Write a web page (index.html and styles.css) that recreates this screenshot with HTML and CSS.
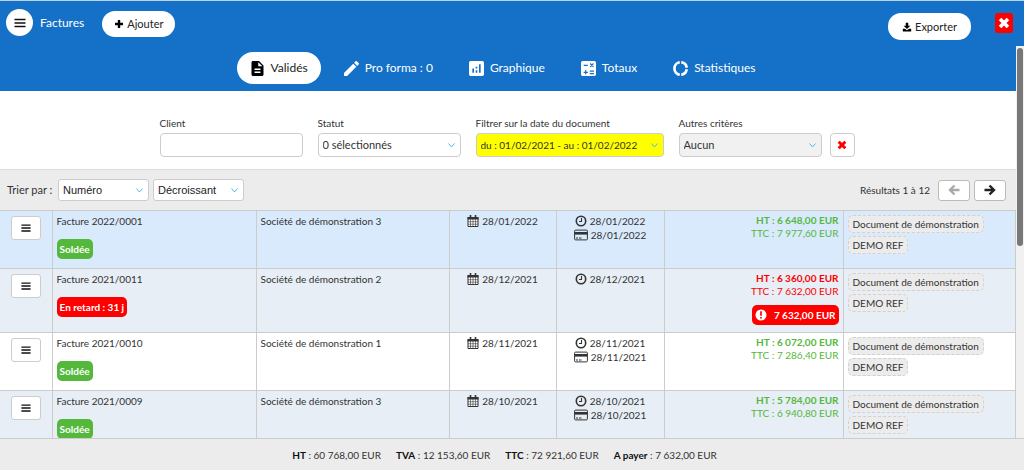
FILE: index.html
```
<!DOCTYPE html>
<html lang="fr">
<head>
<meta charset="utf-8">
<title>Factures</title>
<meta name="viewport" content="width=device-width, initial-scale=1">
<link rel="stylesheet" href="styles.css">
</head>
<body>
<svg class="sprite" aria-hidden="true">
  <symbol id="bars" viewBox="0 0 12 12"><path d="M.5 2.500h11M.5 6h11M.5 9.500h11" stroke="currentColor" stroke-width="1.700"/></symbol>
  <symbol id="plus" viewBox="0 0 10 10"><path d="M5 1v8M1 5h8" stroke="currentColor" stroke-width="2.400"/></symbol>
  <symbol id="cross" viewBox="0 0 10 10"><path d="M1.700 1.700l6.600 6.600M8.300 1.700L1.700 8.300" stroke="currentColor" stroke-width="3"/></symbol>
  <symbol id="download" viewBox="0 0 12 12"><path d="M4.500 1h3v3.500H10L6 8.500 2 4.500h2.500zM1 8h2.500L6 10l2.500-2H11v3.500H1z" fill="currentColor"/></symbol>
  <symbol id="doc" viewBox="4 2 16 20"><path d="M14 2H6c-1.100 0-2 .9-2 2v16c0 1.100.9 2 2 2h12c1.100 0 2-.9 2-2V8l-6-6zm2 16H8v-2h8v2zm0-4H8v-2h8v2zm-3-5V3.500L18.500 9H13z" fill="currentColor"/></symbol>
  <symbol id="pencil" viewBox="3 3 18 18"><path d="M3 17.250V21h3.750L17.810 9.940l-3.750-3.750L3 17.250zM20.710 7.040a1 1 0 0 0 0-1.410l-2.340-2.340a1 1 0 0 0-1.410 0l-1.830 1.830 3.750 3.750 1.830-1.830z" fill="currentColor"/></symbol>
  <symbol id="chart" viewBox="3 3 18 18"><path fill-rule="evenodd" d="M19 3H5a2 2 0 0 0-2 2v14a2 2 0 0 0 2 2h14a2 2 0 0 0 2-2V5a2 2 0 0 0-2-2zM9 17H7v-5h2v5zm4 0h-2v-3h2v3zm0-5h-2v-2h2v2zm4 5h-2V7h2v10z" fill="currentColor"/></symbol>
  <symbol id="calc" viewBox="3 3 18 18"><rect x="3" y="3" width="18" height="18" rx="2" fill="currentColor"/><path d="M6.200 8.300h5M13.500 15h5M13.500 18h5M8.700 14v5M6.200 16.500h5M14 6l4 4M18 6l-4 4" stroke="#1471c7" stroke-width="1.500"/></symbol>
  <symbol id="donut" viewBox="2 2 20 20"><path d="M13 3.700a8.400 8.400 0 0 1 7.300 7.300M20.300 13a8.400 8.400 0 0 1-7.300 7.300M11 20.300A8.400 8.400 0 0 1 11 3.700" fill="none" stroke="currentColor" stroke-width="3.600"/></symbol>
  <symbol id="calendar" viewBox="0 0 12 12"><path d="M1 2.500h10v9H1z" fill="#fff" stroke="currentColor"/><path d="M.5 2h11v2.500H.5z" fill="currentColor"/><path d="M3.500 4v7.500M6 4v7.500M8.500 4v7.500M1 6.700h10M1 9.200h10" stroke="currentColor" stroke-width=".6"/><path d="M3.500 0v3M8.500 0v3" stroke="currentColor" stroke-width="1.600"/></symbol>
  <symbol id="clock" viewBox="0 0 12 12"><circle cx="6" cy="6" r="4.700" fill="none" stroke="currentColor" stroke-width="1.600"/><path d="M6.500 3v3.500H4" fill="none" stroke="currentColor" stroke-width="1.100"/></symbol>
  <symbol id="card" viewBox="0 0 14 12"><rect x=".6" y="1.100" width="12.800" height="9.800" rx="1" fill="none" stroke="currentColor" stroke-width="1"/><path d="M.5 3h13v2.600H.5z" fill="currentColor"/><path d="M2 9h2M5 9h2.500" stroke="currentColor"/></symbol>
  <symbol id="alert" viewBox="0 0 12 12"><circle cx="6" cy="6" r="5.500" fill="#fff"/><path d="M6 2.300v4.400M6 7.900v1.700" stroke="#f00" stroke-width="1.700"/></symbol>
  <symbol id="left" viewBox="0 0 12 12"><path d="M11.500 6H2.500M6.500 1.500L2 6l4.500 4.500" fill="none" stroke="currentColor" stroke-width="2.400"/></symbol>
  <symbol id="right" viewBox="0 0 12 12"><path d="M.5 6h9M5.500 1.500L10 6l-4.500 4.500" fill="none" stroke="currentColor" stroke-width="2.400"/></symbol>
</svg>

<header class="topbar">
  <button class="round" aria-label="Menu"><svg class="icon"><use href="#bars"/></svg></button>
  <h1 class="title">Factures</h1>
  <button class="pill"><svg class="icon-s"><use href="#plus"/></svg>Ajouter</button>
  <button class="pill export"><svg class="icon-s"><use href="#download"/></svg>Exporter</button>
  <button class="close" aria-label="Fermer"><svg class="icon"><use href="#cross"/></svg></button>
</header>

<div class="body">
  <main class="content">
    <nav class="tabs">
      <a href="#" class="tab active"><svg class="icon-l"><use href="#doc"/></svg>Validés</a>
      <a href="#" class="tab"><svg class="icon-l"><use href="#pencil"/></svg>Pro forma : 0</a>
      <a href="#" class="tab"><svg class="icon-l"><use href="#chart"/></svg>Graphique</a>
      <a href="#" class="tab"><svg class="icon-l"><use href="#calc"/></svg>Totaux</a>
      <a href="#" class="tab"><svg class="icon-l"><use href="#donut"/></svg>Statistiques</a>
    </nav>

    <form class="filters">
      <div class="field"><label for="client">Client</label><input class="control" id="client" type="text"></div>
      <div class="field"><label for="statut">Statut</label><select class="control" id="statut"><option>0 sélectionnés</option></select></div>
      <div class="field wide"><label for="date">Filtrer sur la date du document</label><select class="control highlighted" id="date"><option>du : 01/02/2021 - au : 01/02/2022</option></select></div>
      <div class="field"><label for="autres">Autres critères</label><select class="control muted" id="autres"><option>Aucun</option></select></div>
      <button class="reset" type="button" aria-label="Réinitialiser"><svg class="icon-s"><use href="#cross"/></svg></button>
    </form>

    <div class="sortbar">
      <label for="tri">Trier par :</label>
      <select class="control sort" id="tri"><option>Numéro</option></select>
      <select class="control sort" aria-label="Ordre"><option>Décroissant</option></select>
      <span class="results">Résultats 1 à 12</span>
      <button class="page" disabled aria-label="Précédent"><svg class="icon"><use href="#left"/></svg></button>
      <button class="page" aria-label="Suivant"><svg class="icon"><use href="#right"/></svg></button>
    </div>

    <table class="invoices">
      <colgroup><col class="c-menu"><col class="c-num"><col class="c-client"><col class="c-date"><col class="c-due"><col class="c-amount"><col class="c-tags"></colgroup>
      <tbody>
      <tr class="selected">
        <td class="menu"><button class="rowmenu" aria-label="Actions"><svg class="icon-s"><use href="#bars"/></svg></button></td>
        <td>Facture 2022/0001<div class="state"><span class="badge paid">Soldée</span></div></td>
        <td>Société de démonstration 3</td>
        <td><div class="date"><svg class="icon"><use href="#calendar"/></svg>28/01/2022</div></td>
        <td><div class="date"><svg class="icon"><use href="#clock"/></svg>28/01/2022</div><div class="date"><svg class="icon-w"><use href="#card"/></svg>28/01/2022</div></td>
        <td class="amount green"><b>HT : 6 648,00 EUR</b><br>TTC : 7 977,60 EUR</td>
        <td><div class="tags"><span class="tag">Document de démonstration</span><span class="tag">DEMO REF</span></div></td>
      </tr>
      <tr class="alt">
        <td class="menu"><button class="rowmenu" aria-label="Actions"><svg class="icon-s"><use href="#bars"/></svg></button></td>
        <td>Facture 2021/0011<div class="state"><span class="badge late">En retard : 31 j</span></div></td>
        <td>Société de démonstration 2</td>
        <td><div class="date"><svg class="icon"><use href="#calendar"/></svg>28/12/2021</div></td>
        <td><div class="date"><svg class="icon"><use href="#clock"/></svg>28/12/2021</div></td>
        <td class="amount red"><b>HT : 6 360,00 EUR</b><br>TTC : 7 632,00 EUR<div class="due"><span class="badge late"><svg class="icon"><use href="#alert"/></svg>7 632,00 EUR</span></div></td>
        <td><div class="tags"><span class="tag">Document de démonstration</span><span class="tag">DEMO REF</span></div></td>
      </tr>
      <tr>
        <td class="menu"><button class="rowmenu" aria-label="Actions"><svg class="icon-s"><use href="#bars"/></svg></button></td>
        <td>Facture 2021/0010<div class="state"><span class="badge paid">Soldée</span></div></td>
        <td>Société de démonstration 1</td>
        <td><div class="date"><svg class="icon"><use href="#calendar"/></svg>28/11/2021</div></td>
        <td><div class="date"><svg class="icon"><use href="#clock"/></svg>28/11/2021</div><div class="date"><svg class="icon-w"><use href="#card"/></svg>28/11/2021</div></td>
        <td class="amount green"><b>HT : 6 072,00 EUR</b><br>TTC : 7 286,40 EUR</td>
        <td><div class="tags"><span class="tag">Document de démonstration</span><span class="tag">DEMO REF</span></div></td>
      </tr>
      <tr class="alt">
        <td class="menu"><button class="rowmenu" aria-label="Actions"><svg class="icon-s"><use href="#bars"/></svg></button></td>
        <td>Facture 2021/0009<div class="state"><span class="badge paid">Soldée</span></div></td>
        <td>Société de démonstration 3</td>
        <td><div class="date"><svg class="icon"><use href="#calendar"/></svg>28/10/2021</div></td>
        <td><div class="date"><svg class="icon"><use href="#clock"/></svg>28/10/2021</div><div class="date"><svg class="icon-w"><use href="#card"/></svg>28/10/2021</div></td>
        <td class="amount green"><b>HT : 5 784,00 EUR</b><br>TTC : 6 940,80 EUR</td>
        <td><div class="tags"><span class="tag">Document de démonstration</span><span class="tag">DEMO REF</span></div></td>
      </tr>
      </tbody>
    </table>
  </main>
  <div class="scrollbar"><div class="thumb"></div></div>
</div>

<footer class="totals">
  <span><b>HT</b> : 60 768,00 EUR</span>
  <span><b>TVA</b> : 12 153,60 EUR</span>
  <span><b>TTC</b> : 72 921,60 EUR</span>
  <span><b>A payer</b> : 7 632,00 EUR</span>
</footer>
</body>
</html>
```
FILE: styles.css
```
* { box-sizing: border-box; }

body {
  margin: 0;
  height: 100vh;
  display: flex;
  flex-direction: column;
  overflow: hidden;
  background: #fff;
  color: #333;
  font: 10px/14px Lato, "Open Sans", sans-serif;
}

button, input, select { font: inherit; color: inherit; margin: 0; }
button { display: flex; align-items: center; justify-content: center; padding: 0; cursor: pointer; }
svg { flex: none; }

.sprite { display: none; }
.icon { width: 12px; height: 12px; }
.icon-s { width: 10px; height: 10px; }
.icon-w { width: 14px; height: 12px; }
.icon-l { width: 15px; height: 15px; }

/* Top bar */
.topbar {
  flex: none;
  display: flex;
  align-items: flex-start;
  height: 46px;
  padding: 8px 11px 0 6px;
  border-top: 1px solid #b9d3ec;
  background: #1471c7;
}
.round { width: 27px; height: 27px; border: 0; border-radius: 50%; background: #fff; color: #111; }
.title { margin: 6px 18px 0 7px; color: #fff; font-size: 12px; line-height: 16px; font-weight: 400; }
.pill {
  gap: 3px;
  height: 26px;
  margin-top: 2px;
  padding: 0 12px;
  border: 0;
  border-radius: 13px;
  background: #fff;
  color: #222;
  font-size: 11px;
}
.pill svg { color: #000; }
.export { height: 27px; margin: 4px 24px 0 auto; padding: 0 14px; }
.close { width: 18px; height: 20px; margin-top: 4px; border: 0; border-radius: 2px; background: #f00; color: #fff; }

/* Scrolling area */
.body { flex: 1; display: flex; min-height: 0; }
.content { flex: 1; min-width: 0; overflow: hidden; }
.scrollbar { flex: none; width: 8px; padding: 2px 1px; background: #f1f1f1; }
.thumb { height: 51%; border-radius: 3px; background: #777; }

.tabs { display: flex; justify-content: center; gap: 10px; height: 45px; padding: 6px 11px 0 0; background: #1471c7; }
.tab {
  display: flex;
  align-items: center;
  gap: 6px;
  height: 32px;
  padding: 0 13px;
  border-radius: 16px;
  color: #fff;
  font-size: 12px;
  text-decoration: none;
}
.tab.active { background: #fff; color: #222; }
.tab.active svg { color: #000; }

/* Filters */
.filters { display: flex; justify-content: center; align-items: flex-end; gap: 15px; height: 78px; padding: 0 2px 12px 0; }
.field { display: flex; flex-direction: column; gap: 3px; width: 143px; }
.field.wide { width: 188px; }
.control {
  width: 100%;
  height: 24px;
  padding: 0 20px 0 4px;
  border: 1px solid #ccc;
  border-radius: 4px;
  background-color: #fff;
  font-size: 11px;
}
select.control {
  appearance: none;
  background-image: url("data:image/svg+xml,%3Csvg xmlns='http://www.w3.org/2000/svg' width='7' height='5' fill='none' stroke='%2345bde8'%3E%3Cpath d='M.5.5l3 3.500 3-3.500'/%3E%3C/svg%3E");
  background-repeat: no-repeat;
  background-position: right 5px center;
}
.control.highlighted { padding-right: 16px; background-color: #ff0; font-size: 10px; }
.control.muted { background-color: #f1f1f1; }
.reset { width: 25px; height: 24px; margin-left: -7px; border: 1px solid #ccc; border-radius: 4px; background: #fff; color: #f00; }

/* Sorting and paging */
.sortbar {
  display: flex;
  align-items: center;
  gap: 4px;
  height: 41px;
  padding: 0 10px 0 7px;
  border-top: 1px solid #ddd;
  background: #ececec;
}
.sortbar label { width: 47px; font-size: 11px; white-space: nowrap; }
.control.sort { width: 91px; height: 22px; border-radius: 3px; font-family: "Liberation Sans", Arial, sans-serif; color: #222; }
.results { margin: 0 4px 0 auto; }
.page { width: 32px; height: 21px; border: 1px solid #bbb; border-radius: 3px; background: #fff; color: #222; }
.page:disabled { color: #aaa; }

/* Invoice list */
.invoices { width: 100%; border-collapse: collapse; table-layout: fixed; }
.c-menu { width: 52px; }
.c-num { width: 204px; }
.c-client { width: 193px; }
.c-date { width: 107px; }
.c-due { width: 108px; }
.c-amount { width: 179px; }
.invoices tr { height: 58px; }
.invoices td { padding: 3px 4px 7px; border: 1px solid #ccc; vertical-align: top; }
.invoices td:first-child { border-left: 0; }
.selected { background: #d9eafc; }
.alt { background: #e7eef5; }
.menu .rowmenu { width: 30px; height: 24px; margin: 2px auto 0; border: 1px solid #ccc; border-radius: 3px; background: #fff; color: #111; }

.badge {
  display: flex;
  align-items: center;
  height: 20px;
  padding: 0 3px;
  border-radius: 5px;
  color: #fff;
  font-weight: 700;
}
.paid { background: #54b83c; }
.late { background: #f00; }
.state { display: flex; margin-top: 11px; }
.due { display: flex; justify-content: flex-end; margin-top: 7px; }
.due .badge { gap: 7px; }

.date { display: flex; align-items: center; justify-content: center; gap: 3px; }
.invoices .amount { line-height: 13px; text-align: right; }
.green { color: #54b83c; }
.red { color: #f00; }

.tags { display: flex; flex-direction: column; align-items: flex-start; gap: 3px; padding-top: 1px; }
.tag {
  height: 18px;
  padding: 1px 4px;
  border: 1px dashed #d5d0cc;
  border-radius: 5px;
  background: #ececec;
  white-space: nowrap;
}

/* Totals */
.totals {
  flex: none;
  display: flex;
  align-items: center;
  justify-content: center;
  gap: 15px;
  height: 32px;
  padding-right: 15px;
  border-top: 1px solid #ccc;
  background: #ececec;
}
.totals b { color: #111; }
```
